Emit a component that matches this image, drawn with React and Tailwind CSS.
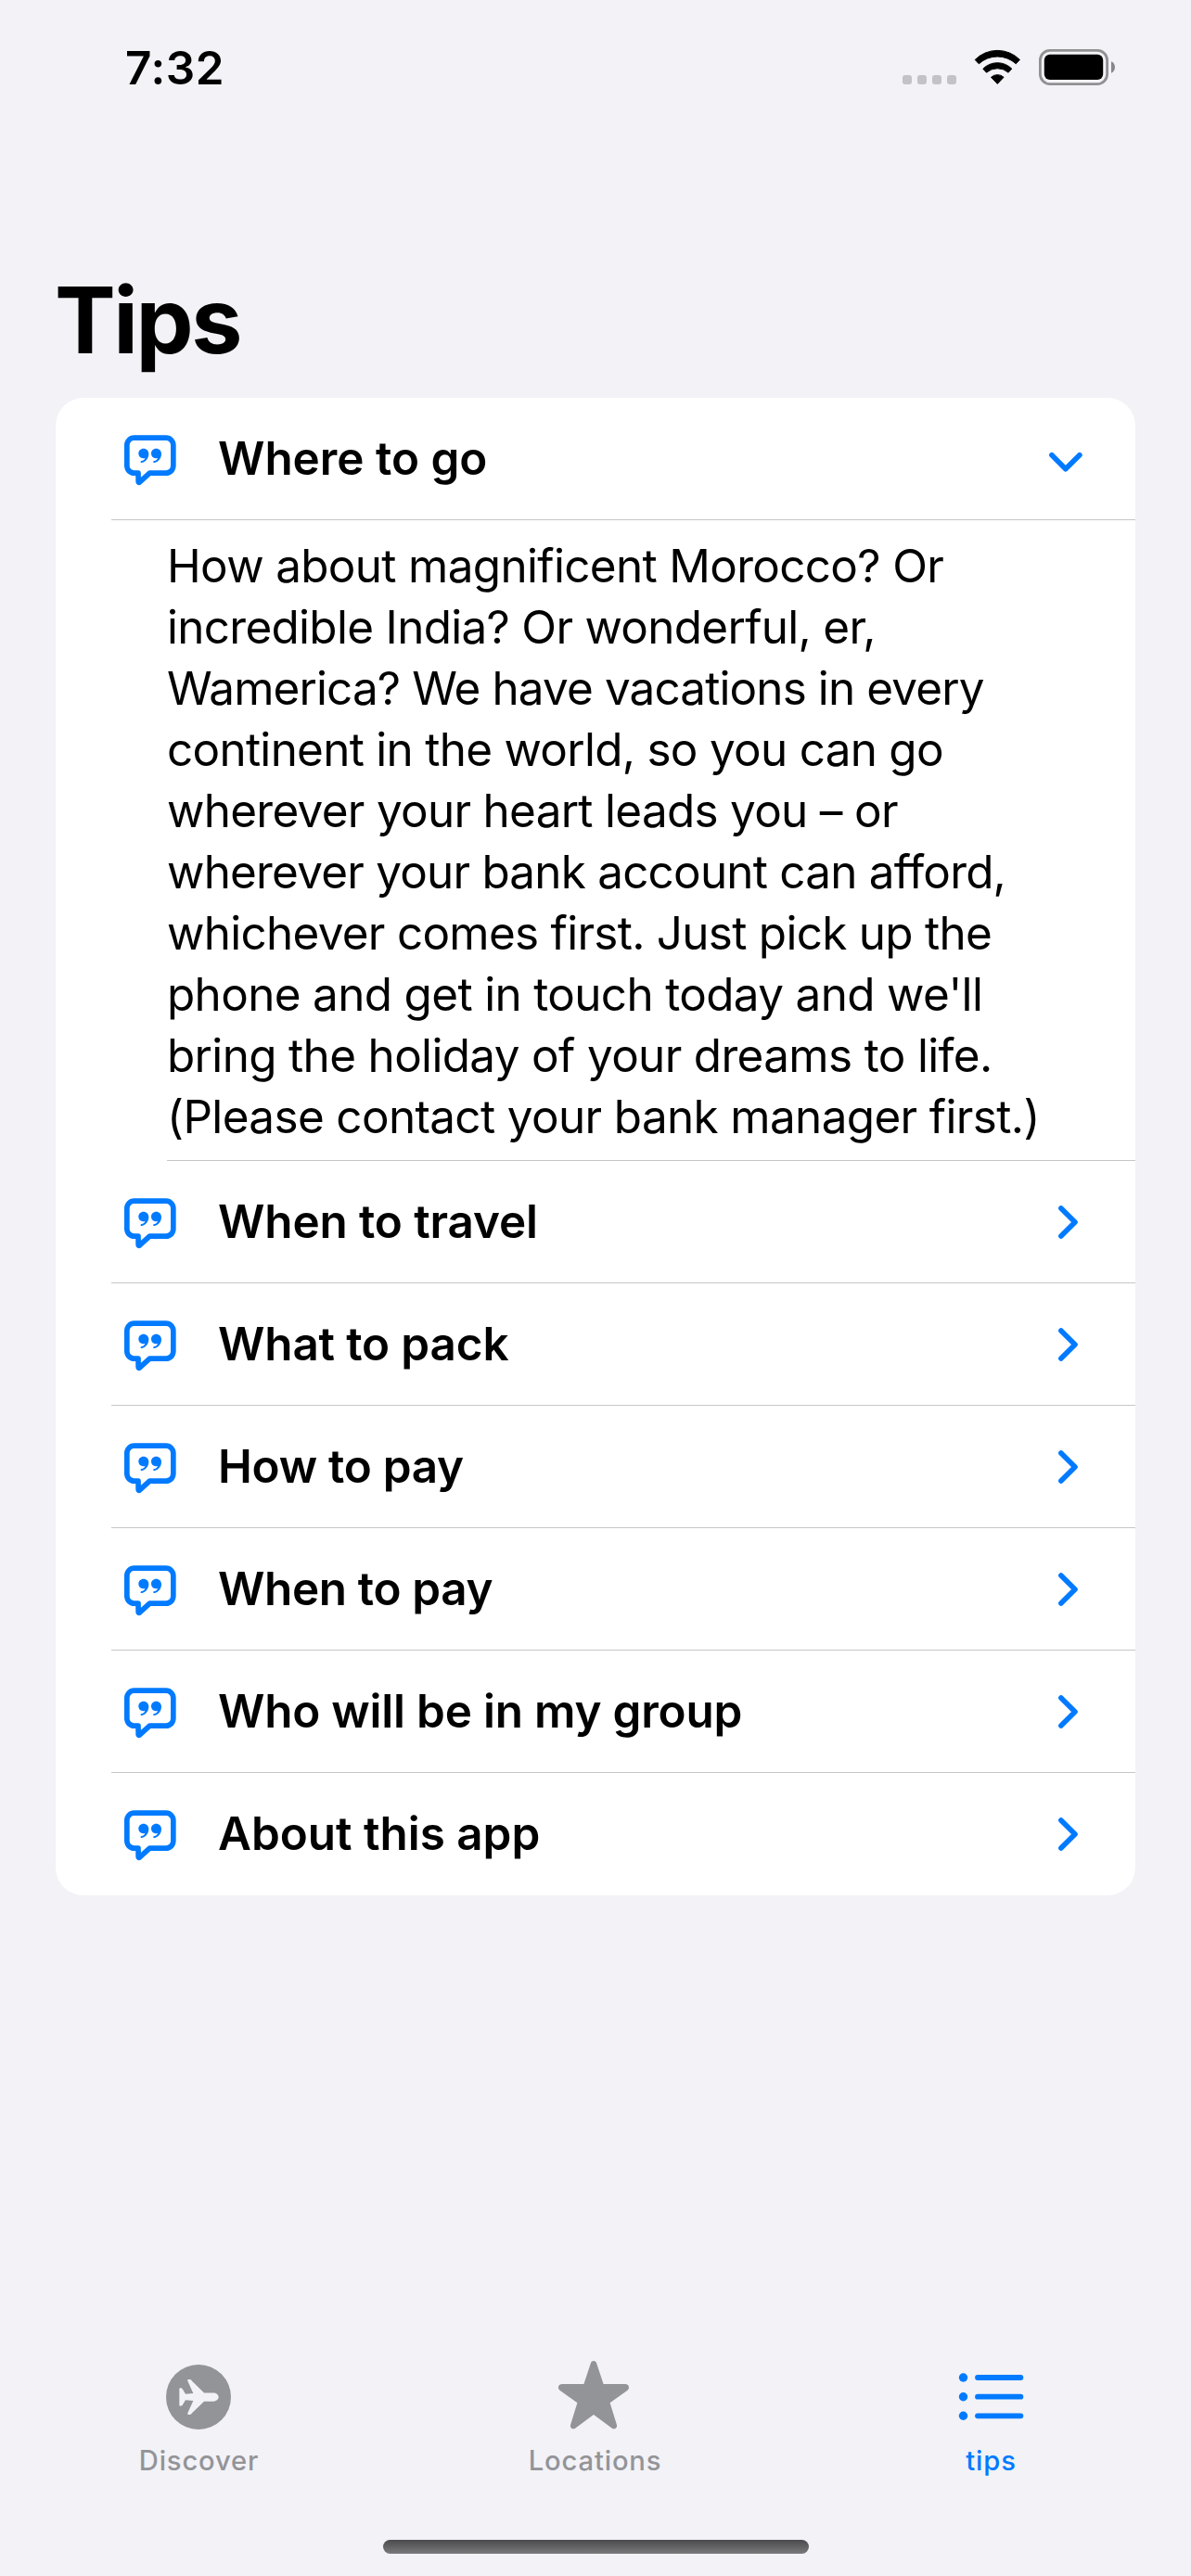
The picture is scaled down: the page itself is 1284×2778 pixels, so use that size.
function WifiIcon() {
  return (
    <svg width="52" height="40" viewBox="0 0 52 40" stroke="#000" strokeWidth="1" strokeLinejoin="round">
      <path d="M1.2 11.4A34 34 0 0 1 49.4 11.4L45.3 15.8A29.5 29.5 0 0 0 5.3 15.8Z" />
      <path d="M9.8 21.2A21.8 21.8 0 0 1 40.8 21.2L37.1 25.2A18 18 0 0 0 13.5 25.2Z" />
      <path d="M18.5 30.3A10 10 0 0 1 32.1 30.3L25.3 37.4Z" />
    </svg>
  );
}

function BatteryIcon() {
  return (
    <svg width="84" height="40" viewBox="0 0 84 40">
      <rect x="1.4" y="1.4" width="72.2" height="36.2" rx="10.5" fill="none" stroke="#919194" strokeWidth="2.8" />
      <rect x="5.8" y="5.8" width="63.4" height="27.2" rx="6" fill="#000" />
      <path d="M78 13.2C80.6 14.4 82 16.8 82 19.5S80.6 24.6 78 25.8Z" fill="#88888b" />
    </svg>
  );
}

const QUOTE =
  "M104 86C95 86 88 93 88 102C88 111 94.5 117.5 103 117.5C105.500 117.500 107.500 117 109.500 116C108 121 103.500 124.800 97.500 126.300C95.500 126.900 94.500 127.800 94.500 129.300C94.500 131.500 96.500 132.600 99 132C112 129 121 118 121 103C121 93 113.500 86 104 86Z";

function QuoteBubbleIcon() {
  return (
    <svg className="shrink-0" width="80" height="80" viewBox="0 0 240 240">
      <path
        d="M87 165.500H74A23.500 23.500 0 0 1 50.500 142V75A23.500 23.500 0 0 1 74 51.500H177A23.500 23.500 0 0 1 200.500 75V142A23.500 23.500 0 0 1 177 165.500H124L91 195.500Q88 197 87.500 193Z"
        fill="none"
        stroke="#007aff"
        strokeWidth="17"
        strokeLinejoin="round"
      />
      <path d={QUOTE} fill="#007aff" />
      <path d={QUOTE} fill="#007aff" transform="translate(41 0)" />
    </svg>
  );
}

function Chevron({ open }) {
  return (
    <svg
      className="ml-auto shrink-0"
      width="48"
      height="48"
      viewBox="0 0 48 48"
      fill="none"
      stroke="#007aff"
      strokeWidth="5.6"
      strokeLinecap="round"
      strokeLinejoin="round"
    >
      <path d={open ? "M8.900 19.800L23.800 34.800L38.900 19.800" : "M18.900 8.900L34 24L18.900 39.100"} />
    </svg>
  );
}

function PlaneIcon() {
  return (
    <svg width="89" height="90" viewBox="0 0 267 270">
      <circle cx="135" cy="135" r="105" fill="#939498" />
      <path
        d="M114 83C112 80 110 78 107 78H103C100 78 99 80 100 83L118 123L93 125.500L84 110C82 107 80 106 77 106H76C74 106 73 107 73 109V161C73 163 74 164 76 164H77C80 164 82 163 84 160L93 144.500L118 147L100 187C99 190 100 192 103 192H107C110 192 112 190 114 187L153 149H183C192 149 200 142 200 135S192 121.500 183 121.500H153Z"
        fill="#f2f2f7"
      />
    </svg>
  );
}

function StarIcon() {
  return (
    <svg width="89" height="90" viewBox="0 0 89 90">
      <path
        d="M40.8 8.800C41.600 5.100 46.400 5.100 47.200 8.800L54.600 31H78C82.200 31 83.400 35.600 80.200 38L61.600 51.300L68.800 74.500C70 78.200 66.600 80.600 63.600 78.400L44 64L24.400 78.400C21.400 80.600 18 78.200 19.200 74.500L26.400 51.300L7.800 38C4.600 35.600 5.800 31 10 31H33.400Z"
        fill="#939498"
      />
    </svg>
  );
}

function ListIcon() {
  return (
    <svg width="89" height="90" viewBox="0 0 89 90">
      {[24, 44.7, 65.3].map((y) => (
        <g key={y}>
          <circle cx="15.500" cy={y} r="4.700" fill="#007aff" />
          <path d={`M31 ${y}H77.400`} stroke="#007aff" strokeWidth="5.800" strokeLinecap="round" />
        </g>
      ))}
    </svg>
  );
}

const body = [
  ["How about magnificent Morocco? Or", "tracking-[-0.65px]"],
  ["incredible India? Or wonderful, er,", "tracking-[-0.68px]"],
  ["Wamerica? We have vacations in every", "tracking-[-0.86px]"],
  ["continent in the world, so you can go", "tracking-[-0.7px]"],
  ["wherever your heart leads you – or", "tracking-[-0.69px]"],
  ["wherever your bank account can afford,", "tracking-[-0.77px]"],
  ["whichever comes first. Just pick up the", "tracking-[-0.7px]"],
  ["phone and get in touch today and we'll", "tracking-[-0.64px]"],
  ["bring the holiday of your dreams to life.", "tracking-[-0.64px]"],
  ["(Please contact your bank manager first.)", "tracking-[-0.62px]"],
];

const tips = [
  ["When to travel", "tracking-[-0.1px]"],
  ["What to pack", "tracking-[-0.12px]"],
  ["How to pay", "tracking-[-0.25px]"],
  ["When to pay", "tracking-[-0.33px]"],
  ["Who will be in my group", "tracking-[-0.195px]"],
  ["About this app", "tracking-normal"],
];

function TipRow({ title, tracking, open, last }) {
  return (
    <div
      className={`ml-[60px] flex h-[132px] items-center border-b pt-px pr-[51px] ${last ? "border-transparent" : "border-[#c6c6c8]"}`}
    >
      <QuoteBubbleIcon />
      <span className={`ml-[35px] pb-[2px] text-[49.4px] leading-[64px] font-semibold whitespace-nowrap ${tracking}`}>
        {title}
      </span>
      <Chevron open={open} />
    </div>
  );
}

function Tab({ icon, label, color }) {
  return (
    <div className="flex w-[427px] flex-col items-center">
      {icon}
      <span className={`mt-[6px] pl-[2px] text-[29.2px] leading-[36px] font-medium tracking-[0.85px] ${color}`}>{label}</span>
    </div>
  );
}

export default function App() {
  return (
    <div className="flex h-[2778px] w-[1284px] flex-col overflow-hidden bg-[#f2f2f7] font-['Inter',sans-serif] text-black">
      <header className="flex h-[93px] justify-between pt-[53px] pr-[80px] pl-[135px]">
        <span className="text-[49.4px] leading-[40px] font-semibold tracking-[0.6px]">7:32</span>
        <div className="flex">
          <div className="mb-[2px] flex gap-[6px] self-end">
            {[0, 1, 2, 3].map((n) => (
              <span key={n} className="size-[10px] rounded-[3px] bg-[#c3c2c7]" />
            ))}
          </div>
          <div className="ml-[19px]">
            <WifiIcon />
          </div>
          <div className="ml-[18px]">
            <BatteryIcon />
          </div>
        </div>
      </header>

      <h1 className="mt-[192px] ml-[59px] text-[98.6px] leading-[120px] font-bold tracking-[-2.5px]">Tips</h1>

      <main className="mx-[60px] mt-[24px] rounded-[30px] bg-white">
        <TipRow title="Where to go" tracking="tracking-normal" open />
        <div className="ml-[120px] border-b border-[#c6c6c8] pt-[16px] pb-[14px] text-[49.4px] leading-[66px] whitespace-nowrap">
          {body.map(([line, tracking]) => (
            <p key={line} className={tracking}>
              {line}
            </p>
          ))}
        </div>
        {tips.map(([title, tracking], i) => (
          <TipRow key={title} title={title} tracking={tracking} last={i === tips.length - 1} />
        ))}
      </main>

      <nav className="mt-auto flex h-[199px] shrink-0">
        <Tab icon={<PlaneIcon />} label="Discover" color="text-[#939498]" />
        <Tab icon={<StarIcon />} label="Locations" color="text-[#939498]" />
        <Tab icon={<ListIcon />} label="tips" color="text-[#007aff]" />
      </nav>
      <div className="mb-[24px] h-[15px] w-[459px] shrink-0 self-center rounded-full bg-linear-to-b from-[#4b4b4d] to-[#7a7a7d]" />
    </div>
  );
}
